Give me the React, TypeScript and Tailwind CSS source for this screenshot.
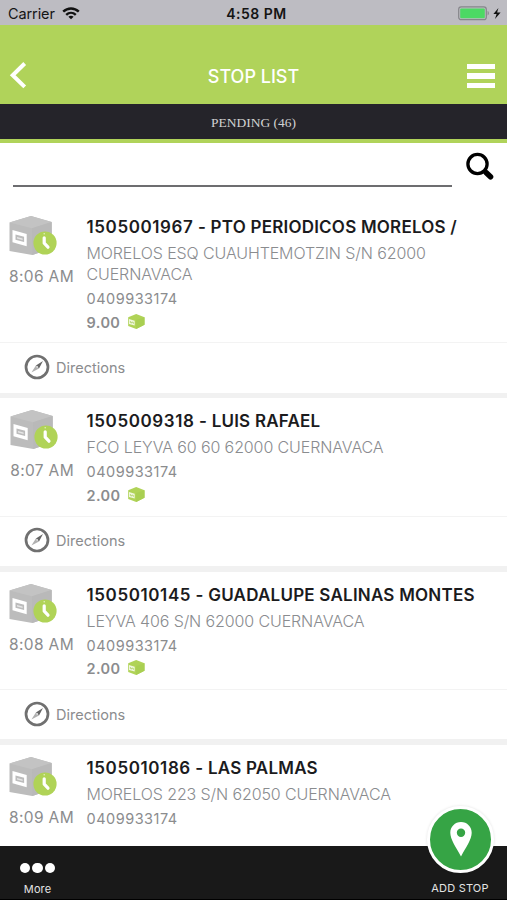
type Stop = {
  id: string;
  name: string;
  address: string[];
  phone: string;
  time: string;
  quantity?: string;
};

const STOPS: Stop[] = [
  {
    id: '1505001967',
    name: 'PTO PERIODICOS MORELOS /',
    address: ['MORELOS ESQ CUAUHTEMOTZIN S/N 62000', 'CUERNAVACA'],
    phone: '0409933174',
    time: '8:06 AM',
    quantity: '9.00',
  },
  {
    id: '1505009318',
    name: 'LUIS RAFAEL',
    address: ['FCO LEYVA 60 60 62000 CUERNAVACA'],
    phone: '0409933174',
    time: '8:07 AM',
    quantity: '2.00',
  },
  {
    id: '1505010145',
    name: 'GUADALUPE SALINAS MONTES',
    address: ['LEYVA 406 S/N 62000 CUERNAVACA'],
    phone: '0409933174',
    time: '8:08 AM',
    quantity: '2.00',
  },
  {
    id: '1505010186',
    name: 'LAS PALMAS',
    address: ['MORELOS 223 S/N 62050 CUERNAVACA'],
    phone: '0409933174',
    time: '8:09 AM',
  },
];

function WifiIcon() {
  return (
    <svg width="18" height="13" viewBox="0 0 18 13" fill="none" stroke="#111" strokeWidth="2.4">
      <path d="M1.2 4.7C5.6.4 12.4.4 16.8 4.7" />
      <path d="M4.2 7.8c2.8-2.6 6.8-2.6 9.6 0" />
      <path d="M9 12.3 6.4 9.7c1.5-1.3 3.7-1.3 5.2 0z" fill="#111" stroke="none" />
    </svg>
  );
}

function BatteryIcon() {
  return (
    <svg width="44" height="15" viewBox="0 0 44 15">
      <rect x="0.7" y="0.9" width="27.6" height="12.8" rx="2.5" fill="none" stroke="#85858a" strokeWidth="1.2" />
      <rect x="2.2" y="2.4" width="24.6" height="9.8" rx="1" fill="#4cd964" />
      <path d="M29.6 5c1.6.6 1.6 3.8 0 4.4z" fill="#85858a" />
      <path d="M40.4 2 35.4 8.1h3.2L37 13l5.6-6.5h-3.5z" fill="#111" />
    </svg>
  );
}

function PackageIcon() {
  return (
    <svg className="block" width="50" height="40" viewBox="0 0 50 40">
      <path d="M.5 6.4 22 0l20.700 6v26.500L23.300 39 .5 35z" fill="#bcbcbc" />
      <path d="M.5 6.4 22 0l20.700 6L23 12.200z" fill="#c3c3c3" />
      <path d="M23 12.200 42.700 6v26.500L23.300 39z" fill="#b9b9b9" />
      <path d="M3.5 14 17.700 18v12.300L3.500 26.300z" fill="#fff" />
      <path d="M6.500 18.500l8.600 2.300v5.200l-8.600-2.300z" fill="#bcbcbc" />
      <path d="M8 21.100l5.600 1.500v1.400L8 22.500z" fill="#e6e6e6" />
      <circle cx="36" cy="27" r="11.6" fill="#b0d357" />
      <path d="M35.2 21.8v5.400l3.800 4" fill="none" stroke="#fff" strokeWidth="3.2" strokeLinecap="round" strokeLinejoin="round" />
      <circle cx="35.2" cy="17.8" r="0.7" fill="#e9f3cd" />
    </svg>
  );
}

function QuantityIcon() {
  return (
    <svg width="17" height="15" viewBox="0 0 17 15">
      <path d="M.2 3.2 8.200 0l8.300 3.200v7.600L8.200 15l-8-3z" fill="#b0d357" />
      <path d="M8.200 6 16.500 3.200v7.600L8.200 15z" fill="#a9cf52" />
      <path d="M1 5l5.700 1.700v4.700L1 9.900z" fill="#f1f8df" />
      <path d="M2.400 7v1.600l1.400.4V8l1.600.4v1.400" fill="none" stroke="#a5c95a" strokeWidth="0.7" />
    </svg>
  );
}

function CompassIcon() {
  return (
    <svg width="26" height="26" viewBox="0 0 26 26">
      <circle cx="13" cy="13" r="11" fill="#fff" stroke="#707070" strokeWidth="2.7" />
      <path d="M19 6.9 15 14.600 11.900 11.400z" fill="#666" />
      <path d="M7.400 18.600 11.900 11.400l3.100 3.200z" fill="#b0b0b0" />
      <circle cx="13.2" cy="12.9" r="0.9" fill="#ddd" />
    </svg>
  );
}

function SearchIcon() {
  return (
    <svg width="29" height="30" viewBox="0 0 29 30" fill="none" stroke="#000">
      <circle cx="11.5" cy="12" r="9.6" strokeWidth="3.3" />
      <path d="m18 18.700 3 3" strokeWidth="3.6" />
      <path d="m20.300 20.800 4.200 4" strokeWidth="5.6" strokeLinecap="round" />
    </svg>
  );
}

function StatusBar() {
  return (
    <div className="grid h-[25px] shrink-0 grid-cols-3 items-center bg-[#bdbcc2] pt-[2px] text-[#151515]">
      <div className="flex items-center gap-[7px] pl-2 text-[14.5px] tracking-[-0.1px]">
        Carrier
        <WifiIcon />
      </div>
      <div className="pl-[6px] text-center text-[14px] font-semibold tracking-[0.5px]">4:58 PM</div>
      <div className="flex justify-end pr-[5px]">
        <BatteryIcon />
      </div>
    </div>
  );
}

function StopCard({ stop }: { stop: Stop }) {
  return (
    <article className="group shrink-0">
      <div className="flex items-start border-b border-[#f3f3f3] pb-[9.8px] pt-3 group-last:border-b-0">
        <div className="flex w-[86.5px] shrink-0 justify-end pr-[12.5px]">
          <div>
            <PackageIcon />
            <div className="mt-[10px] whitespace-nowrap text-[15.5px] leading-[21px] tracking-[0.35px] text-[#8b8c8e]">
              {stop.time}
            </div>
          </div>
        </div>
        <div className="whitespace-nowrap">
          <h2 className="text-[17px] font-semibold leading-[23px] tracking-[0.22px] text-[#1b1b1d]">
            <span className="tracking-[0.6px]">{stop.id}</span> - {stop.name}
          </h2>
          <div className="mt-1 text-[16px] font-light leading-[21px] tracking-[-0.11px] text-[#8a8c8f]">
            {stop.address.map((line) => (
              <p key={line}>{line}</p>
            ))}
          </div>
          <p className="mt-1 text-[14.5px] leading-5 tracking-[0.5px] text-[#8b8c8e]">{stop.phone}</p>
          {stop.quantity && (
            <div className="mt-[3.5px] flex h-5 items-center gap-[7.5px] text-[14.5px] font-semibold leading-5 tracking-[0.4px] text-[#8b8c8e]">
              {stop.quantity}
              <span className="-mt-[3px]">
                <QuantityIcon />
              </span>
            </div>
          )}
        </div>
      </div>
      {stop.quantity && (
        <>
          <button
            type="button"
            className="flex h-[49.5px] w-full items-center gap-[6px] pl-[24px] text-[14.5px] text-[#8b8c8e]"
          >
            <span className="-mt-[2px]">
              <CompassIcon />
            </span>
            <span>Directions</span>
          </button>
          <div className="h-[5.5px] bg-[#f1f1f1]" />
        </>
      )}
    </article>
  );
}

export default function App() {
  return (
    <div className="flex h-[900px] w-[507px] flex-col overflow-hidden bg-white font-['Inter',sans-serif]">
      <StatusBar />

      <header className="grid h-[78.5px] shrink-0 grid-cols-3 items-center bg-[#b0d35a] pt-[23px] text-white">
        <button type="button" aria-label="Back" className="pl-[9px]">
          <svg width="18" height="27" viewBox="0 0 18 27" fill="none" stroke="#fff" strokeWidth="4">
            <path d="M15.700 1.500 3.700 13.200l12 11.700" />
          </svg>
        </button>
        <h1 className="whitespace-nowrap pt-[2px] text-center text-[18px] font-medium">STOP LIST</h1>
        <div className="flex flex-col items-end gap-1 pr-3">
          <div className="h-[5.5px] w-7 bg-white" />
          <div className="h-[5.5px] w-7 bg-white" />
          <div className="h-[5.5px] w-7 bg-white" />
        </div>
      </header>

      <div className="h-[39.5px] shrink-0 border-b-4 border-[#b0d35a] bg-[#25242a] text-center font-['Liberation_Serif',serif] text-[13.5px] leading-[37px] text-[#d2d2d2]">
        PENDING (46)
      </div>

      <div className="flex h-[61px] shrink-0 justify-between pl-[13px] pr-[13px]">
        <div className="h-[43.5px] w-[439px] border-b-2 border-[#6d6d70]" />
        <div className="-mr-px pt-[9px]">
          <SearchIcon />
        </div>
      </div>

      <main className="flex min-h-0 flex-1 flex-col overflow-hidden">
        {STOPS.map((stop) => (
          <StopCard key={stop.id} stop={stop} />
        ))}
      </main>

      <footer className="relative flex h-[54px] shrink-0 items-end justify-between bg-[#191919] text-[11px] text-[#e4e4e4]">
        <div className="flex w-[75px] flex-col items-center gap-[8.5px] pb-[3.5px]">
          <div className="flex gap-[2px]">
            <div className="size-[10.5px] rounded-full bg-white" />
            <div className="size-[10.5px] rounded-full bg-white" />
            <div className="size-[10.5px] rounded-full bg-white" />
          </div>
          <span className="leading-[15px] tracking-[0.1px]">More</span>
        </div>
        <div className="w-[94px] pb-[4.5px] text-center leading-[15px] tracking-[0.2px]">ADD STOP</div>
        <button
          type="button"
          aria-label="Add stop"
          className="absolute right-[13px] top-[-40px] flex size-[67px] items-center justify-center rounded-full border-[3px] border-white bg-[#36a445] shadow-[0_0_3px_rgba(0,0,0,0.12)]"
        >
          <svg className="-mt-px" width="22" height="35" viewBox="0 0 22 35">
            <path
              fillRule="evenodd"
              fill="#fff"
              d="M11 0C4.900 0 .3 4.800.3 10.700.3 17.500 6 25 11 34.500 16 25 21.700 17.500 21.700 10.700 21.700 4.800 17.100 0 11 0zm0 6.500a4.200 4.200 0 1 1 0 8.400 4.200 4.200 0 0 1 0-8.400z"
            />
          </svg>
        </button>
        <div className="absolute inset-x-0 bottom-0 h-px bg-black" />
      </footer>
    </div>
  );
}
